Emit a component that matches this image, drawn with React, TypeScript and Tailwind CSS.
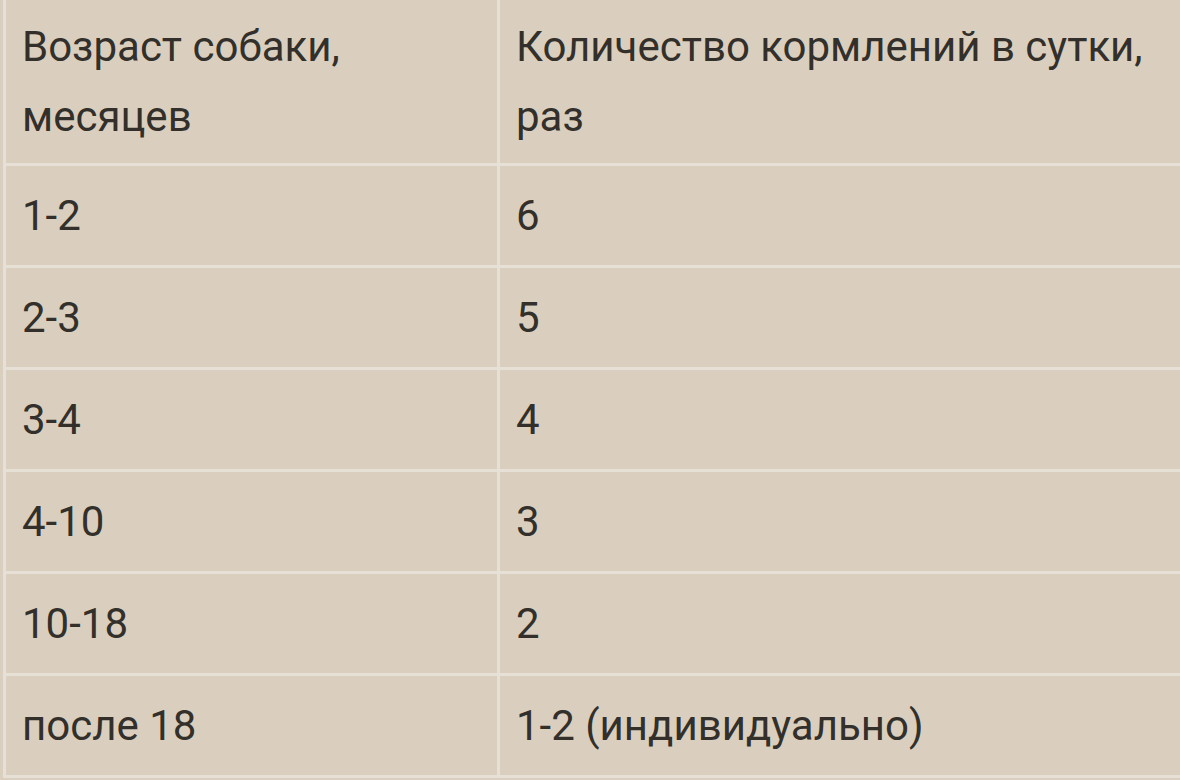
const rows = [
  { age: "1-2", times: "6" },
  { age: "2-3", times: "5" },
  { age: "3-4", times: "4" },
  { age: "4-10", times: "3" },
  { age: "10-18", times: "2" },
  { age: "после 18", times: "1-2 (индивидуально)" },
];

export default function App() {
  return (
    <div className="w-[1180px] h-[780px] overflow-hidden bg-[#dacfbe] pl-[3px] font-['Roboto',sans-serif] text-[42px] leading-[70px] text-[#33302b]">
      <div className="grid grid-cols-[491px_1fr] grid-rows-[163px_repeat(6,99px)] gap-[3px] bg-[#e6e0d6] border-l-[3px] border-b-[3px] border-[#e6e0d6]">
        <div className="bg-[#dacfbe] flex flex-col justify-center pl-4">
          <span>Возраст собаки,</span>
          <span>месяцев</span>
        </div>
        <div className="bg-[#dacfbe] flex flex-col justify-center pl-4">
          <span>Количество кормлений в сутки,</span>
          <span>раз</span>
        </div>
        {rows.map((r) => (
          <>
            <div key={r.age + "a"} className="bg-[#dacfbe] flex items-center pl-4">{r.age}</div>
            <div key={r.age + "b"} className="bg-[#dacfbe] flex items-center pl-4">{r.times}</div>
          </>
        ))}
      </div>
    </div>
  );
}
